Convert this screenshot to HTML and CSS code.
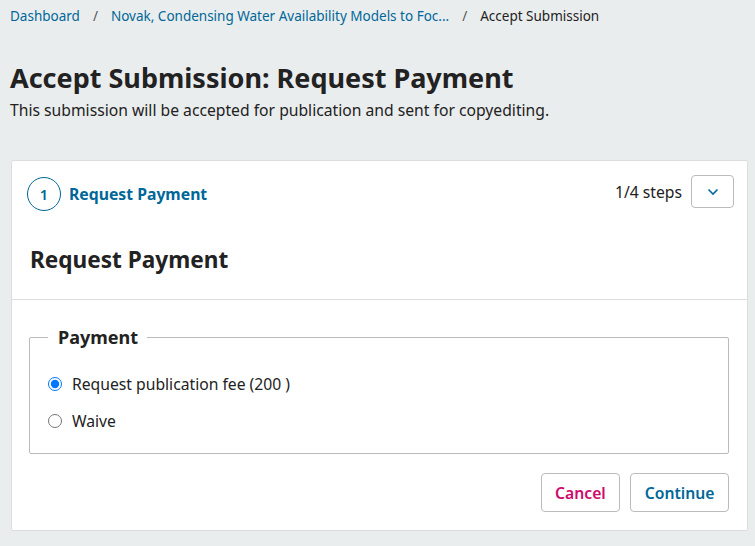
FILE: index.html
```html
<!DOCTYPE html>
<html lang="en">
<head>
<meta charset="utf-8">
<title>Accept Submission: Request Payment</title>
<link rel="stylesheet" href="styles.css">
</head>
<body>
<div class="page">
  <nav class="breadcrumb">
    <a href="#" class="crumb-link">Dashboard</a>
    <span class="sep">/</span>
    <a href="#" class="crumb-link">Novak, Condensing Water Availability Models to Foc...</a>
    <span class="sep">/</span>
    <span class="crumb-current">Accept Submission</span>
  </nav>
  <h1 class="title">Accept Submission: Request Payment</h1>
  <p class="subtitle">This submission will be accepted for publication and sent for copyediting.</p>

  <section class="card">
    <div class="card-head">
      <div class="step">
        <span class="step-num">1</span>
        <span class="step-name">Request Payment</span>
      </div>
      <div class="step-right">
        <span class="step-count">1/4 steps</span>
        <button class="toggle" type="button" aria-label="Show steps">
          <svg width="12" height="8" viewBox="0 0 12 8"><path d="M1.5 1.5 L6 6 L10.5 1.5" fill="none" stroke="#006798" stroke-width="1.6"/></svg>
        </button>
      </div>
    </div>
    <h2 class="card-title">Request Payment</h2>
    <div class="card-body">
      <fieldset class="fieldset">
        <legend class="legend">Payment</legend>
        <label class="option"><input type="radio" name="pay" class="radio" checked><span>Request publication fee (200 )</span></label>
        <label class="option"><input type="radio" name="pay" class="radio"><span>Waive</span></label>
      </fieldset>
      <div class="actions">
        <button class="btn btn-cancel" type="button">Cancel</button>
        <button class="btn btn-continue" type="button">Continue</button>
      </div>
    </div>
  </section>
</div>
</body>
</html>
```

FILE: styles.css
```css
* { box-sizing: border-box; }
html, body { margin: 0; padding: 0; }
body {
  background: #eaedee;
  font-family: "Noto Sans", "Open Sans", sans-serif;
  color: #222;
  width: 755px;
  height: 546px;
  overflow: hidden;
}
.page { padding: 8px 8px 0 10px; }
.breadcrumb {
  font-size: 13.5px;
  line-height: 16px;
  display: flex;
  align-items: center;
}
.crumb-link { color: #006798; text-decoration: none; }
.sep { color: #555; margin: 0 13px; }
.crumb-current { color: #222; }
.title {
  margin: 36px 0 0;
  font-size: 27px;
  line-height: 36px;
  font-weight: 700;
}
.subtitle {
  margin: 3px 0 0;
  font-size: 15.7px;
  line-height: 22px;
}
.card {
  margin: 39px 0 0 1px;
  width: 737px;
  height: 371px;
  background: #fff;
  border: 1px solid #ddd;
  border-radius: 2px;
}
.card-head {
  display: flex;
  justify-content: space-between;
  align-items: flex-start;
  padding: 14px 13px 0 15px;
}
.step { display: flex; align-items: center; margin-top: 2px; }
.step-num {
  width: 34px; height: 34px;
  border: 1px solid #006798;
  border-radius: 50%;
  display: flex; align-items: center; justify-content: center;
  font-size: 14.5px;
  font-weight: 600;
  color: #006798;
}
.step-name {
  margin-left: 8px;
  font-size: 15.75px;
  font-weight: 700;
  color: #006798;
}
.step-right { display: flex; align-items: center; }
.step-count { font-size: 15.7px; margin-right: 9px; }
.toggle {
  width: 43px; height: 33px;
  background: #fff;
  border: 1px solid #bbb;
  border-radius: 4px;
  display: flex; align-items: center; justify-content: center;
  padding: 0;
}
.card-title {
  margin: 0;
  padding: 34px 18px 24px;
  font-size: 22.6px;
  line-height: 30px;
  font-weight: 700;
  border-bottom: 1px solid #ddd;
}
.card-body { padding: 25px 18px 0 17px; }
.fieldset {
  margin: 0;
  border: 1px solid #bbb;
  border-radius: 2px;
  padding: 24px 18px 0;
  height: 129px;
}
.legend {
  font-size: 18px;
  font-weight: 700;
  padding: 0 9px 0 10px;
  margin-left: 0;
}
.option {
  display: flex;
  align-items: center;
  font-size: 15.7px;
  line-height: 22px;
  margin-bottom: 15px;
}
.radio {
  margin: 0 10px 0 0;
  width: 14px; height: 14px;
}
.actions {
  display: flex;
  justify-content: flex-end;
  gap: 10px;
  margin-top: 19px;
}
.btn {
  height: 39px;
  background: #fff;
  border: 1px solid #bbb;
  border-radius: 4px;
  font-family: inherit;
  font-size: 15.7px;
  font-weight: 600;
  padding: 0 13.5px;
}
.btn-cancel { color: #d00a6c; }
.btn-continue { color: #006798; }
```
